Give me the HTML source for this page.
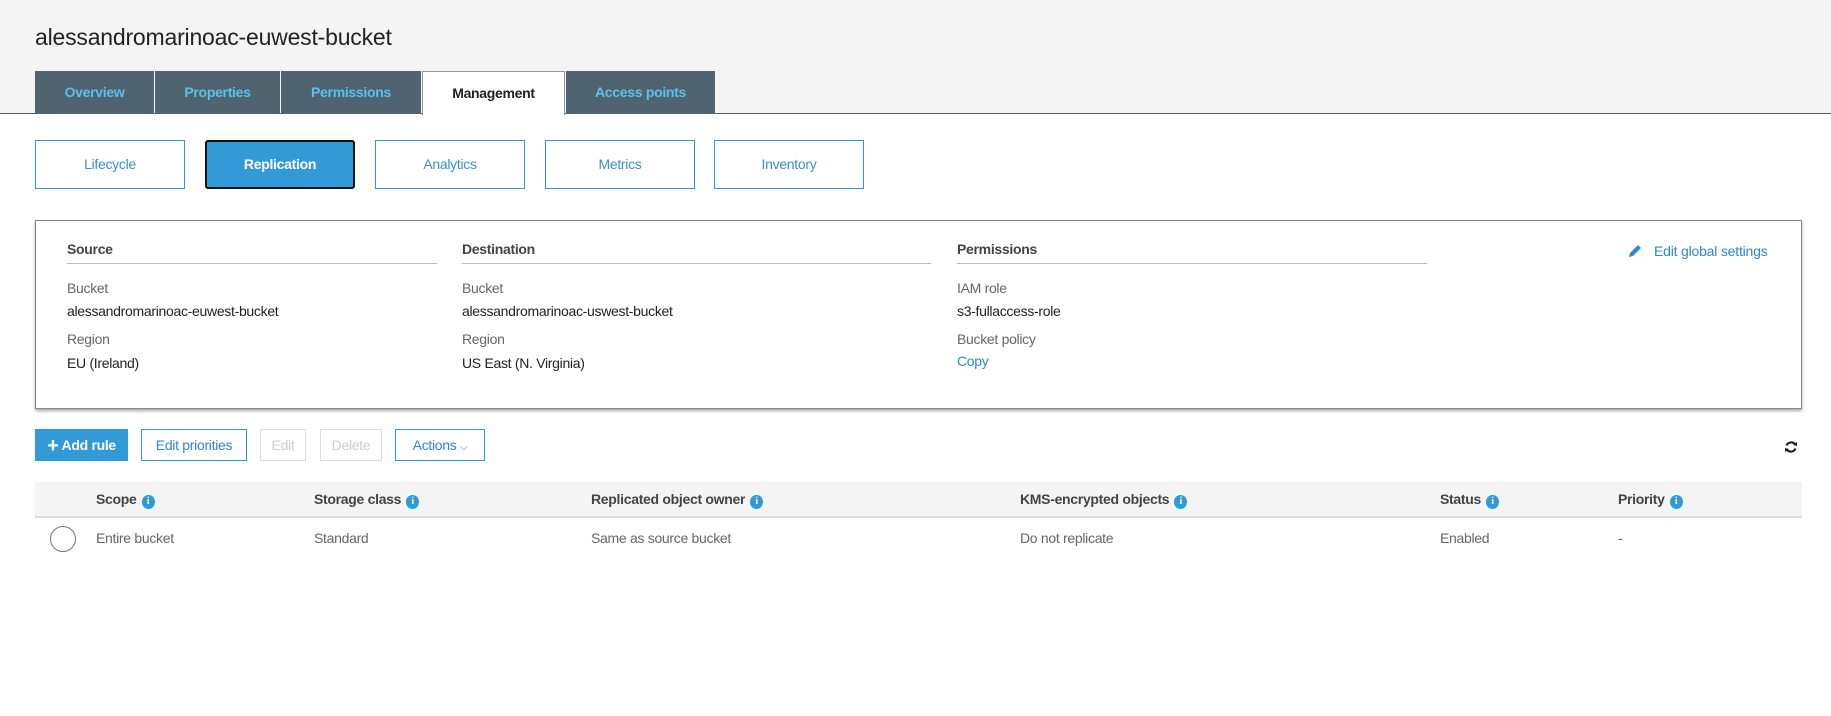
<!DOCTYPE html>
<html><head><meta charset="utf-8"><style>
*{box-sizing:border-box;margin:0;padding:0}
body{width:1831px;height:716px;position:relative;background:#fff;font-family:"Liberation Sans",sans-serif;color:#333;overflow:hidden}
.a{position:absolute;white-space:nowrap}
.hdr{position:absolute;left:0;top:0;width:1831px;height:114px;background:#f3f4f3;border-bottom:1px solid #545b64}
.tab{position:absolute;top:71px;height:43px;background:#4f6470;color:#5bc0eb;font-weight:bold;font-size:14px;text-align:center;line-height:42px;letter-spacing:-.3px}
.tab.on{background:#fff;color:#222;border:1px solid #8a9aa5;border-bottom:none;height:44px}
.sub{position:absolute;top:140px;height:49px;width:150px;border:1px solid #2e9ad8;color:#3a8fcf;font-size:14px;text-align:center;line-height:47px;letter-spacing:-.3px}
.sub.on{background:#339ad8;color:#fff;border:2px solid #111;border-radius:3px;font-weight:bold;line-height:45px}
.lbl{font-size:14px;color:#666;letter-spacing:-.3px}
.val{font-size:14px;color:#222;letter-spacing:-.3px}
.h{font-size:14px;font-weight:bold;color:#444;letter-spacing:-.3px}
.btn{position:absolute;top:429px;height:32px;border:1px solid #2e9ad8;color:#2e88cc;font-size:14px;line-height:30px;text-align:center;letter-spacing:-.3px}
.dis{border-color:#ddd;color:#ccc}
.i{display:inline-block;width:13px;height:14px;border-radius:50%;background:#2e9ad8;color:#fff;font-size:10px;line-height:14px;text-align:center;font-weight:bold;vertical-align:0px;margin-left:5px;font-family:"Liberation Serif",serif}
</style></head><body>
<div class="hdr"></div>
<div class="a" style="left:35px;top:24px;font-size:23px;color:#222;letter-spacing:-.2px">alessandromarinoac-euwest-bucket</div>
<div class="tab" style="left:35px;width:119px">Overview</div>
<div class="tab" style="left:155px;width:125px">Properties</div>
<div class="tab" style="left:281px;width:140px">Permissions</div>
<div class="tab on" style="left:422px;width:143px">Management</div>
<div class="tab" style="left:566px;width:149px">Access points</div>

<div class="sub" style="left:35px">Lifecycle</div>
<div class="sub on" style="left:205px">Replication</div>
<div class="sub" style="left:375px">Analytics</div>
<div class="sub" style="left:545px">Metrics</div>
<div class="sub" style="left:714px">Inventory</div>

<div class="a" style="left:35px;top:220px;width:1767px;height:189px;border:1px solid #888;box-shadow:0 2px 3px rgba(0,0,0,.35)"></div>
<div class="a h" style="left:67px;top:241px">Source</div>
<div class="a h" style="left:462px;top:241px">Destination</div>
<div class="a h" style="left:957px;top:241px">Permissions</div>
<div class="a" style="left:67px;top:263px;width:370px;border-top:1px solid #bbb"></div>
<div class="a" style="left:462px;top:263px;width:469px;border-top:1px solid #bbb"></div>
<div class="a" style="left:957px;top:263px;width:470px;border-top:1px solid #bbb"></div>
<div class="a lbl" style="left:67px;top:280px">Bucket</div>
<div class="a val" style="left:67px;top:303px">alessandromarinoac-euwest-bucket</div>
<div class="a lbl" style="left:67px;top:331px">Region</div>
<div class="a val" style="left:67px;top:355px">EU (Ireland)</div>
<div class="a lbl" style="left:462px;top:280px">Bucket</div>
<div class="a val" style="left:462px;top:303px">alessandromarinoac-uswest-bucket</div>
<div class="a lbl" style="left:462px;top:331px">Region</div>
<div class="a val" style="left:462px;top:355px">US East (N. Virginia)</div>
<div class="a lbl" style="left:957px;top:280px">IAM role</div>
<div class="a val" style="left:957px;top:303px">s3-fullaccess-role</div>
<div class="a lbl" style="left:957px;top:331px">Bucket policy</div>
<div class="a val" style="left:957px;top:353px;color:#2e88cc">Copy</div>
<svg class="a" style="left:1627px;top:243px" width="16" height="16" viewBox="0 0 16 16"><path d="M2 14 L3 10 L11 2 L14 5 L6 13 Z" fill="#2e88cc"/></svg>
<div class="a" style="left:1654px;top:243px;font-size:14px;color:#2e88cc;letter-spacing:-.2px">Edit global settings</div>

<div class="btn" style="left:35px;width:93px;background:#339ad8;color:#fff;font-weight:bold;border-color:#339ad8"><span style="font-size:20px;vertical-align:-2px">+</span> Add rule</div>
<div class="btn" style="left:141px;width:106px">Edit priorities</div>
<div class="btn dis" style="left:260px;width:46px">Edit</div>
<div class="btn dis" style="left:320px;width:62px">Delete</div>
<div class="btn" style="left:395px;width:90px">Actions <span style="font-size:10px">&#x2335;</span></div>
<svg class="a" style="left:1784px;top:440px" width="14" height="14" viewBox="0 0 14 14"><path d="M11.5 5 A5 5 0 0 0 2.5 5.5 M2.5 9 A5 5 0 0 0 11.5 8.5" stroke="#222" stroke-width="2.2" fill="none"/><path d="M9 5 L13 6 L13 2 Z M5 9 L1 8 L1 12 Z" fill="#222"/></svg>

<div class="a" style="left:35px;top:482px;width:1767px;height:36px;background:#f3f4f3;border-bottom:2px solid #ddd"></div>
<div class="a h" style="left:96px;top:491px">Scope<span class="i">i</span></div>
<div class="a h" style="left:314px;top:491px">Storage class<span class="i">i</span></div>
<div class="a h" style="left:591px;top:491px">Replicated object owner<span class="i">i</span></div>
<div class="a h" style="left:1020px;top:491px">KMS-encrypted objects<span class="i">i</span></div>
<div class="a h" style="left:1440px;top:491px">Status<span class="i">i</span></div>
<div class="a h" style="left:1618px;top:491px">Priority<span class="i">i</span></div>
<div class="a" style="left:50px;top:526px;width:26px;height:26px;border:1px solid #777;border-radius:50%"></div>
<div class="a lbl" style="left:96px;top:530px">Entire bucket</div>
<div class="a lbl" style="left:314px;top:530px">Standard</div>
<div class="a lbl" style="left:591px;top:530px">Same as source bucket</div>
<div class="a lbl" style="left:1020px;top:530px">Do not replicate</div>
<div class="a lbl" style="left:1440px;top:530px">Enabled</div>
<div class="a lbl" style="left:1618px;top:530px">-</div>
</body></html>
